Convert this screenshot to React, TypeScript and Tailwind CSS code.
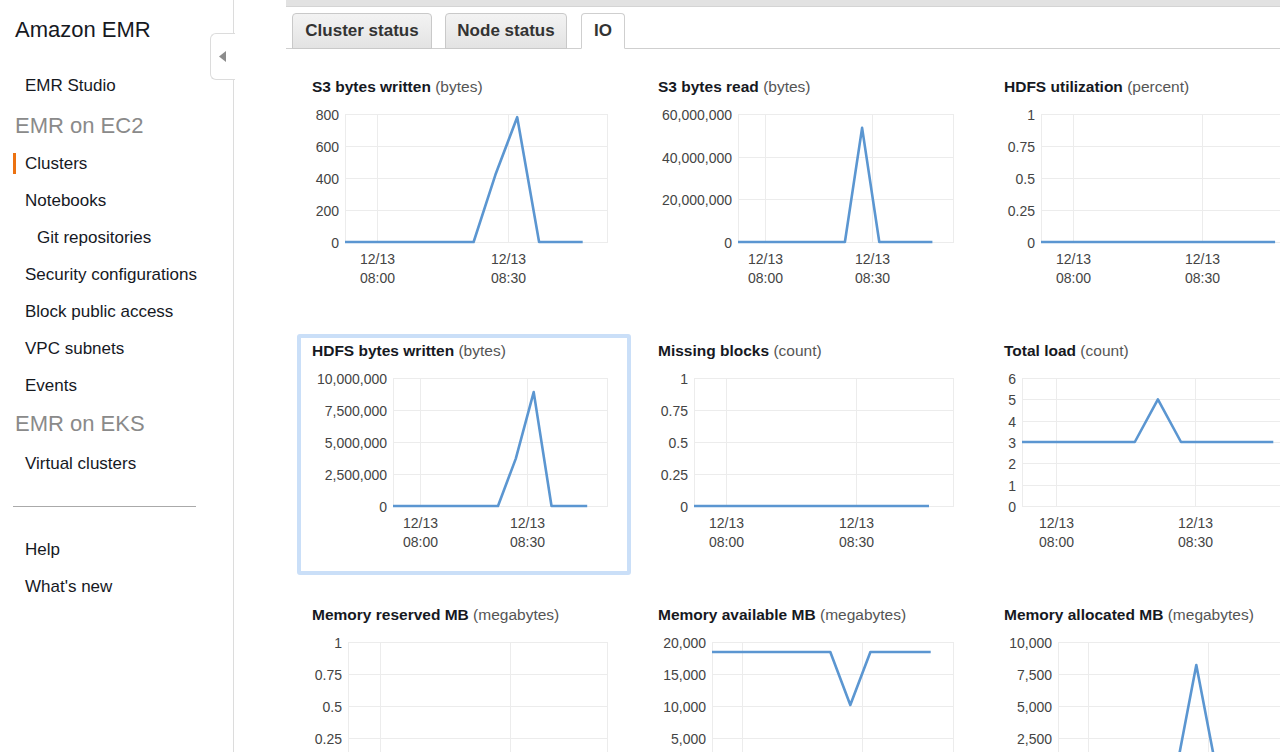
import React from "react";

type Point = [number, number];

type ChartDef = {
	name: string;
	unit: string;
	ticks: string[];
	max: number;
	left: number;
	series: Point[];
	active?: boolean;
};

const START = -7.44;

const charts: ChartDef[] = [
	{
		name: "S3 bytes written",
		unit: "bytes",
		ticks: ["800", "600", "400", "200", "0"],
		max: 800,
		left: 33,
		series: [[START, 0], [22, 0], [27, 420], [32, 780], [37, 0], [47, 0]],
	},
	{
		name: "S3 bytes read",
		unit: "bytes",
		ticks: ["60,000,000", "40,000,000", "20,000,000", "0"],
		max: 60000000,
		left: 80,
		series: [[START, 0], [22.4, 0], [27.2, 53500000], [32, 0], [46.8, 0]],
	},
	{
		name: "HDFS utilization",
		unit: "percent",
		ticks: ["1", "0.75", "0.5", "0.25", "0"],
		max: 1,
		left: 37,
		series: [[START, 0], [47, 0]],
	},
	{
		name: "HDFS bytes written",
		unit: "bytes",
		ticks: ["10,000,000", "7,500,000", "5,000,000", "2,500,000", "0"],
		max: 10000000,
		left: 81,
		series: [[START, 0], [22, 0], [27, 3700000], [32, 8900000], [37, 0], [47, 0]],
		active: true,
	},
	{
		name: "Missing blocks",
		unit: "count",
		ticks: ["1", "0.75", "0.5", "0.25", "0"],
		max: 1,
		left: 36,
		series: [[START, 0], [47, 0]],
	},
	{
		name: "Total load",
		unit: "count",
		ticks: ["6", "5", "4", "3", "2", "1", "0"],
		max: 6,
		left: 18,
		series: [[START, 3], [17, 3], [22, 5], [27, 3], [47, 3]],
	},
	{
		name: "Memory reserved MB",
		unit: "megabytes",
		ticks: ["1", "0.75", "0.5", "0.25", "0"],
		max: 1,
		left: 36,
		series: [[START, 0], [47, 0]],
	},
	{
		name: "Memory available MB",
		unit: "megabytes",
		ticks: ["20,000", "15,000", "10,000", "5,000", "0"],
		max: 20000,
		left: 54,
		series: [[START, 18440], [22, 18440], [27, 10150], [32, 18440], [47, 18440]],
	},
	{
		name: "Memory allocated MB",
		unit: "megabytes",
		ticks: ["10,000", "7,500", "5,000", "2,500", "0"],
		max: 10000,
		left: 54,
		series: [[START, 0], [22, 0], [27, 8200], [32, 0], [47, 0]],
	},
];

// plot box inside each chart svg
const TOP = 19;
const HEIGHT = 128;
const RIGHT = 295;

function LineChart({ chart }: { chart: ChartDef }) {
	const w = RIGHT - chart.left;
	const x = (t: number) => chart.left + w * (0.124 + t / 60);
	const y = (v: number) => TOP + HEIGHT * (1 - v / chart.max);
	const bottom = TOP + HEIGHT;
	const steps = chart.ticks.length - 1;
	const points = chart.series.map(([t, v]) => `${x(t).toFixed(1)},${y(v).toFixed(1)}`).join(" ");

	return (
		<svg width={300} height={195} className="block overflow-visible">
			<rect x={chart.left + 0.5} y={TOP + 0.5} width={w} height={HEIGHT} fill="none" stroke="#ececec" />
			{chart.ticks.map((label, i) => {
				const gy = Math.round(TOP + (HEIGHT * i) / steps) + 0.5;
				return (
					<g key={label + i}>
						<line x1={chart.left} x2={RIGHT} y1={gy} y2={gy} stroke="#ececec" />
						<text x={chart.left - 6} y={gy + 5} textAnchor="end" fontSize={14} fill="#444">
							{label}
						</text>
					</g>
				);
			})}
			{[0, 30].map((t) => {
				const gx = Math.round(x(t)) + 0.5;
				return (
					<g key={t}>
						<line x1={gx} x2={gx} y1={TOP} y2={bottom} stroke="#ececec" />
						<text x={gx} y={bottom + 22} textAnchor="middle" fontSize={14} fill="#444">
							12/13
						</text>
						<text x={gx} y={bottom + 41} textAnchor="middle" fontSize={14} fill="#444">
							{t === 0 ? "08:00" : "08:30"}
						</text>
					</g>
				);
			})}
			<polyline points={points} fill="none" stroke="#5b96d1" strokeWidth={2.6} strokeLinejoin="round" />
		</svg>
	);
}

function ChartCard({ chart }: { chart: ChartDef }) {
	return (
		<div
			className={`h-[241px] rounded-[3px] border-4 px-[11px] pt-[4px] ${
				chart.active ? "border-[#cadff8]" : "border-transparent"
			}`}
		>
			<div className="h-[17px] whitespace-nowrap text-[15.5px] leading-[18px] text-[#16191f]">
				<span className="font-bold">{chart.name}</span>{" "}
				<span className="text-[#555]">({chart.unit})</span>
			</div>
			<LineChart chart={chart} />
		</div>
	);
}

function NavItem({ label, indent, current }: { label: string; indent?: boolean; current?: boolean }) {
	if (current) {
		return (
			<div className="flex h-[37px] items-center pl-[13px]">
				<span className="border-l-[3px] border-[#ec7211] pl-[9px] leading-[21px]">{label}</span>
			</div>
		);
	}
	return (
		<div className={`flex h-[37px] items-center ${indent ? "pl-[37px]" : "pl-[25px]"}`}>{label}</div>
	);
}

function Section({ label, className = "" }: { label: string; className?: string }) {
	return (
		<div className={`flex h-[41px] items-center pl-[15px] text-[22px] text-[#8a8a8a] ${className}`}>
			{label}
		</div>
	);
}

function Sidebar() {
	return (
		<aside className="relative h-full w-[234px] shrink-0 border-r border-[#dcdcdc] text-[17px] text-[#16191f]">
			<div className="h-[67px] pl-[15px] pt-[18px] text-[22px] leading-[24px]">Amazon EMR</div>
			<NavItem label="EMR Studio" />
			<Section label="EMR on EC2" className="pt-[2px]" />
			<NavItem label="Clusters" current />
			<NavItem label="Notebooks" />
			<NavItem label="Git repositories" indent />
			<NavItem label="Security configurations" />
			<NavItem label="Block public access" />
			<NavItem label="VPC subnets" />
			<NavItem label="Events" />
			<Section label="EMR on EKS" className="h-[39px] pb-[2px]" />
			<NavItem label="Virtual clusters" />
			<div className="ml-[13px] mr-[37px] mb-[24px] mt-[24px] border-t border-[#aaa]" />
			<NavItem label="Help" />
			<NavItem label="What's new" />
			<button className="absolute left-[210px] top-[33px] flex h-[47px] w-[25px] items-center justify-center rounded-l-[6px] border border-r-0 border-[#dcdcdc] bg-white">
				<svg width="8" height="11" viewBox="0 0 8 11">
					<polygon points="7,0 7,11 0,5.5" fill="#8c8c8c" />
				</svg>
			</button>
		</aside>
	);
}

function Tab({ label, width, active }: { label: string; width: string; active?: boolean }) {
	return (
		<div
			className={`-mb-px flex h-[36px] items-center justify-center rounded-t-[4px] border text-[17px] font-bold text-[#333] ${width} ${
				active
					? "border-[#cfcfcf] border-b-white bg-white"
					: "border-[#c9c9c9] bg-gradient-to-b from-[#f3f3f3] to-[#e3e3e3]"
			}`}
		>
			{label}
		</div>
	);
}

export default function App() {
	return (
		<div className="flex h-[752px] w-[1280px] overflow-hidden bg-white font-['Liberation_Sans',Arial,sans-serif]">
			<Sidebar />
			<main className="min-w-0 flex-1 pl-[52px]">
				<div className="h-[7px] border-b border-[#d4d4d4] bg-[#e2e2e2]" />
				<div className="mt-[6px] flex items-end border-b border-[#cfcfcf] pl-[6px]">
					<Tab label="Cluster status" width="w-[140px]" />
					<Tab label="Node status" width="ml-[13px] w-[122px]" />
					<Tab label="IO" width="ml-[14px] w-[44px]" active />
				</div>
				<div className="mt-[21px] grid w-[1050px] grid-cols-[334px_334px_334px] gap-x-[12px] gap-y-[23px] pl-[11px]">
					{charts.map((c) => (
						<ChartCard key={c.name} chart={c} />
					))}
				</div>
			</main>
		</div>
	);
}
